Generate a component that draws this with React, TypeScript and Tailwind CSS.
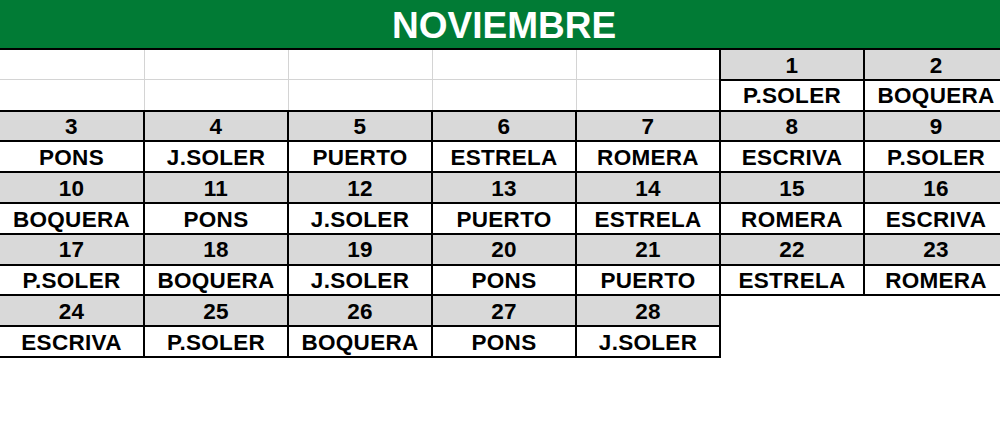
type Day = { n: number; name: string } | null;

const weeks: Day[][] = [
  [null, null, null, null, null, { n: 1, name: "P.SOLER" }, { n: 2, name: "BOQUERA" }],
  [
    { n: 3, name: "PONS" },
    { n: 4, name: "J.SOLER" },
    { n: 5, name: "PUERTO" },
    { n: 6, name: "ESTRELA" },
    { n: 7, name: "ROMERA" },
    { n: 8, name: "ESCRIVA" },
    { n: 9, name: "P.SOLER" },
  ],
  [
    { n: 10, name: "BOQUERA" },
    { n: 11, name: "PONS" },
    { n: 12, name: "J.SOLER" },
    { n: 13, name: "PUERTO" },
    { n: 14, name: "ESTRELA" },
    { n: 15, name: "ROMERA" },
    { n: 16, name: "ESCRIVA" },
  ],
  [
    { n: 17, name: "P.SOLER" },
    { n: 18, name: "BOQUERA" },
    { n: 19, name: "J.SOLER" },
    { n: 20, name: "PONS" },
    { n: 21, name: "PUERTO" },
    { n: 22, name: "ESTRELA" },
    { n: 23, name: "ROMERA" },
  ],
  [
    { n: 24, name: "ESCRIVA" },
    { n: 25, name: "P.SOLER" },
    { n: 26, name: "BOQUERA" },
    { n: 27, name: "PONS" },
    { n: 28, name: "J.SOLER" },
    null,
    null,
  ],
];

export default function App() {
  return (
    <div
      className="w-[1000px] h-[425px] overflow-hidden bg-white text-black"
      style={{ fontFamily: '"Liberation Sans", Arial, sans-serif' }}
    >
      <table className="w-[1008px] table-fixed border-collapse">
        <colgroup>
          {Array.from({ length: 7 }).map((_, i) => (
            <col key={i} className="w-[144px]" />
          ))}
        </colgroup>
        <tbody>
          <tr className="h-[49px]">
            <td
              colSpan={7}
              className="bg-[#017b35] border-b-2 border-black text-center text-white text-[37px] font-bold leading-none pt-[2px]"
            >
              NOVIEMBRE
            </td>
          </tr>
          {weeks.map((week, w) => {
            const blank = w === 0 ? "border border-[#d4d4d4] first:border-l-0" : "";
            return [
              <tr key={`n${w}`} className="h-[30.8px]">
                {week.map((d, i) =>
                  d ? (
                    <td
                      key={i}
                      className="bg-[#d9d9d9] border-2 border-black first:border-l-0 text-center text-[22.5px] font-bold leading-none pt-[3px] tracking-[0.3px]"
                    >
                      {d.n}
                    </td>
                  ) : (
                    <td key={i} className={blank} />
                  )
                )}
              </tr>,
              <tr key={`s${w}`} className="h-[30.8px]">
                {week.map((d, i) =>
                  d ? (
                    <td
                      key={i}
                      className="bg-white border-2 border-black first:border-l-0 text-center text-[22.5px] font-bold leading-none pt-[3px] tracking-[0.3px]"
                    >
                      {d.name}
                    </td>
                  ) : (
                    <td key={i} className={blank} />
                  )
                )}
              </tr>,
            ];
          })}
        </tbody>
      </table>
    </div>
  );
}
